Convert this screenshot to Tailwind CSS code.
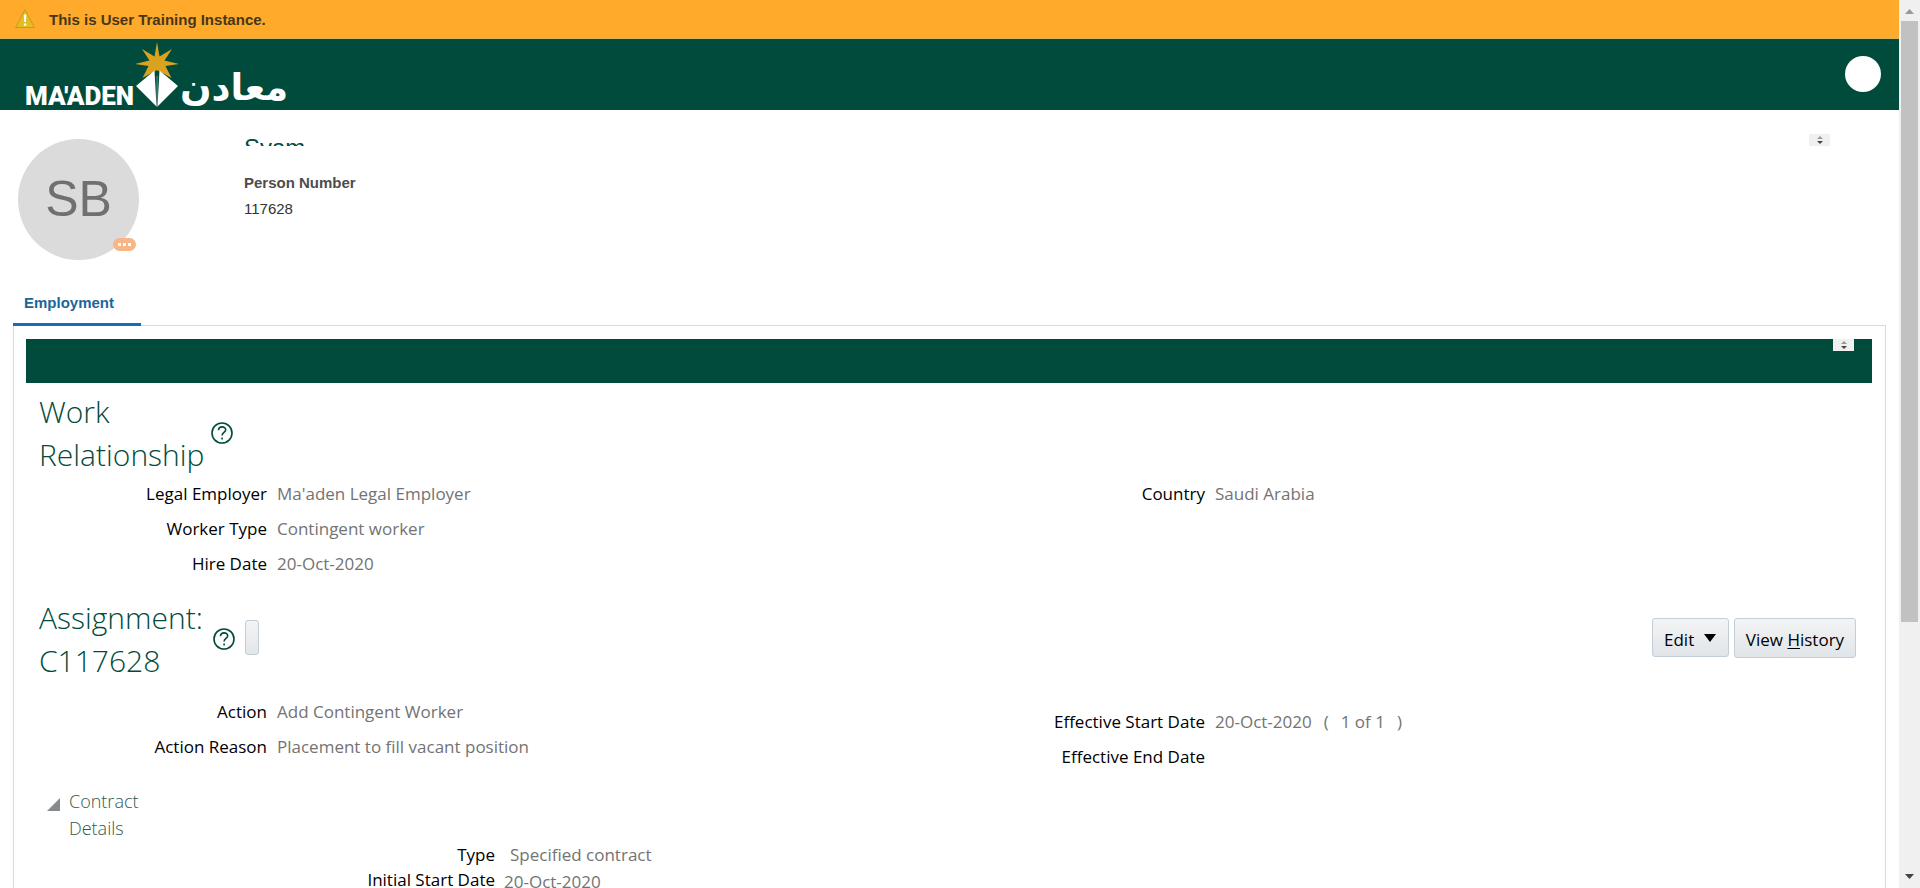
<!DOCTYPE html>
<html lang="en">
<head>
<meta charset="utf-8">
<title>Employment</title>
<script src="https://cdn.jsdelivr.net/npm/@tailwindcss/browser@4"></script>
</head>
<body class="flex h-screen overflow-hidden bg-white font-['Liberation_Sans',Arial,sans-serif] text-[15px]">
<div class="min-w-0 flex-1 overflow-hidden">
  <div role="alert" class="flex h-[39px] items-center gap-[14px] border-b border-[#d3b45c] bg-[#ffaa2b] pt-[2px] pl-[15px] font-bold text-[#473718]">
    <svg class="mb-[2px] h-5 w-5" viewBox="0 0 20 20"><path d="M10 .8 19.400 18.500H.6z" fill="#e3bd22" stroke="#c99a1c" stroke-width="1" stroke-linejoin="round"/><path d="M8.800 5.500h2.600l-.5 7.500H9.300zM8.900 14.400h2.400v2.400H8.900z" fill="#fff"/></svg>
    <p>This is User Training Instance.</p>
  </div>

  <header class="flex h-[71px] items-center justify-between bg-[#004b3b] pr-[18px] pl-[25px]">
    <a href="#" aria-label="Ma'aden home">
      <svg class="h-[71px] w-[270px]" viewBox="25 39 270 71">
        <text x="25" y="105" font-family="Roboto" font-weight="900" font-size="26" fill="#fff">MA'ADEN</text>
        <path fill="#d9a31f" d="M157 42l2.500 14.500L172 49l-7.500 11.500L179 64l-13.500 2L171.500 78 158 70.500h-2L142.500 78l6-12L135 64l14.500-3.500L142 49l12.500 7.500z"/>
        <path fill="#fff" d="M154.500 70.500 136 86l20.500 20.500zM159.500 70.500 178 86l-20.500 20.500z"/><path fill="#fff" d="M156.500 76h1.200v31h-1.200z" opacity=".35"/>
        <text x="180" y="100" font-family="DejaVu Sans" font-weight="700" font-size="37" fill="#fff">معادن</text>
      </svg>
    </a>
    <button aria-label="User menu" class="mb-px h-9 w-9 rounded-full bg-white"></button>
  </header>

  <section class="flex h-[150px] items-start pl-[18px] pt-6">
    <div class="relative mt-[5px] flex h-[121px] w-[121px] items-center justify-center rounded-full bg-[#dbdbdb] text-[50px] text-[#707070]">SB
      <button aria-label="More" class="absolute right-[3px] bottom-[9px] flex h-[13px] w-[23px] items-center justify-center gap-[2px] rounded-full bg-[#f9b584]"><i class="h-[3px] w-[3px] bg-white"></i><i class="h-[3px] w-[3px] bg-white"></i><i class="h-[3px] w-[3px] bg-white"></i></button>
    </div>
    <div class="ml-[105px] flex-1">
      <h1 class="h-3 overflow-hidden text-2xl leading-7 text-[#004b3b]">Syam</h1>
      <dl class="mt-6">
        <dt class="leading-[26px] font-bold text-[#4d4d4d]">Person Number</dt>
        <dd class="leading-[26px] text-[#333]">117628</dd>
      </dl>
    </div>
    <button aria-label="Scroll name" class="mr-[69px] flex h-3 w-[21px] items-center justify-center bg-[#f0f0f0]"><svg class="h-2 w-[6px]" viewBox="0 0 6 8"><path d="M0 3h6L3 0z" fill="#999"/><path d="M0 5h6L3 8z" fill="#444"/></svg></button>
  </section>

  <nav class="flex h-[66px] items-end pl-[13px]">
    <a href="#" class="h-10 w-[128px] border-b-[3px] border-[#156cb8] pl-[11px] leading-[34px] font-bold text-[#1c6598]">Employment</a>
  </nav>

  <main class="mx-[13px] mt-[-1px] h-[600px] border border-[#d6dbdf] pr-[13px] pl-3 pt-[13px] font-['Open_Sans','Noto_Sans',sans-serif] text-[17px]">
    <div class="flex h-[44px] justify-end bg-[#004b3b] pr-[18px]">
      <button aria-label="Scroll section" class="flex h-3 w-[21px] items-center justify-center bg-[#f0f0f0]"><svg class="h-2 w-[6px]" viewBox="0 0 6 8"><path d="M0 3h6L3 0z" fill="#999"/><path d="M0 5h6L3 8z" fill="#444"/></svg></button>
    </div>

    <div class="mt-[7px] flex items-center pl-[13px] text-[#004b3b]">
      <h2 class="w-[172px] text-[30px] leading-[43px] font-light">Work Relationship</h2>
      <button aria-label="Help"><svg class="h-[22px] w-[22px]" viewBox="0 0 22 22" fill="none" stroke="currentColor" stroke-width="1.600"><circle cx="11" cy="11" r="10"/><path d="M7.500 8.300c0-4.600 7.200-4.400 7.200-.6 0 2.700-3.600 2.800-3.600 5.800M11.100 15.400v2"/></svg></button>
    </div>
    <div class="grid grid-cols-2 leading-[35px] font-medium text-[#737373]">
      <dl class="grid grid-cols-[241px_1fr] content-start gap-x-[10px]">
        <dt class="text-right text-black">Legal Employer</dt><dd>Ma'aden Legal Employer</dd>
        <dt class="text-right text-black">Worker Type</dt><dd>Contingent worker</dd>
        <dt class="text-right text-black">Hire Date</dt><dd>20-Oct-2020</dd>
      </dl>
      <dl class="grid grid-cols-[256px_1fr] content-start gap-x-[10px]">
        <dt class="text-right text-black">Country</dt><dd>Saudi Arabia</dd>
      </dl>
    </div>

    <div class="mt-[15px] flex items-center pr-4 pl-[13px] text-[#004b3b]">
      <h2 class="w-[174px] text-[30px] leading-[43px] font-light">Assignment: C117628</h2>
      <button aria-label="Help"><svg class="h-[22px] w-[22px]" viewBox="0 0 22 22" fill="none" stroke="currentColor" stroke-width="1.600"><circle cx="11" cy="11" r="10"/><path d="M7.500 8.300c0-4.600 7.200-4.400 7.200-.6 0 2.700-3.600 2.800-3.600 5.800M11.100 15.400v2"/></svg></button>
      <button aria-label="Assignment options" class="mb-1 ml-[10px] h-[35px] w-[14px] rounded-[3px] border border-[#c4ced7] bg-linear-to-b from-[#f3f4f5] to-[#e3e6e9]"></button>
      <div class="mb-[2px] ml-auto flex gap-[5px] font-medium text-black">
        <button class="flex h-[39px] w-[77px] items-center gap-[10px] rounded-[3px] border border-[#c4ced7] bg-linear-to-b from-[#f3f4f5] to-[#e1e5e9] pt-1 pl-[11px]">Edit<svg class="mb-1 h-2 w-3" viewBox="0 0 12 8"><path d="M0 0h12L6 8z"/></svg></button>
        <button class="h-10 w-[122px] rounded-[3px] border border-[#c4ced7] bg-linear-to-b from-[#f3f4f5] to-[#e1e5e9] pt-1 whitespace-nowrap">View <u class="underline-offset-2">H</u>istory</button>
      </div>
    </div>
    <div class="mt-3 grid grid-cols-2 leading-[35px] font-medium text-[#737373]">
      <dl class="grid grid-cols-[241px_1fr] content-start gap-x-[10px]">
        <dt class="text-right text-black">Action</dt><dd>Add Contingent Worker</dd>
        <dt class="text-right text-black">Action Reason</dt><dd>Placement to fill vacant position</dd>
      </dl>
      <dl class="grid grid-cols-[256px_1fr] content-start gap-x-[10px] pt-[10px]">
        <dt class="text-right text-black">Effective Start Date</dt><dd class="flex gap-3"><span>20-Oct-2020</span><span>(</span><span>1 of 1</span><span>)</span></dd>
        <dt class="text-right text-black">Effective End Date</dt><dd></dd>
      </dl>
    </div>

    <div class="mt-[14px] flex pl-[21px] text-[#2f5a50]">
      <button aria-label="Collapse contract details" class="mt-[10px] h-[13px] w-[13px]"><svg class="h-[13px] w-[13px]" viewBox="0 0 13 13"><path d="M13 0v13H0z" fill="#868a8c"/></svg></button>
      <h3 class="ml-[9px] w-[90px] text-[18px] leading-[27px] font-light">Contract Details</h3>
    </div>
    <dl class="grid grid-cols-[469px_1fr] gap-x-[9px] leading-[25px] font-medium text-[#737373]">
      <dt class="text-right text-black">Type</dt><dd class="pl-[6px]">Specified contract</dd>
      <dt class="text-right text-black">Initial Start Date</dt><dd class="pt-[2px]">20-Oct-2020</dd>
    </dl>
  </main>
</div>

<div class="flex w-[21px] shrink-0 flex-col items-center bg-[#f0f0f0]" aria-hidden="true">
  <svg class="mt-[9px] h-[5px] w-[9px] shrink-0" viewBox="0 0 9 5"><path d="M0 5h9L4.500 0z" fill="#999"/></svg>
  <div class="mt-[7px] h-[601px] w-[17px] shrink-0 bg-[#c1c1c1]"></div>
  <svg class="mt-auto mb-[9px] h-[5px] w-[9px] shrink-0" viewBox="0 0 9 5"><path d="M0 0h9L4.500 5z" fill="#444"/></svg>
</div>
</body>
</html>
